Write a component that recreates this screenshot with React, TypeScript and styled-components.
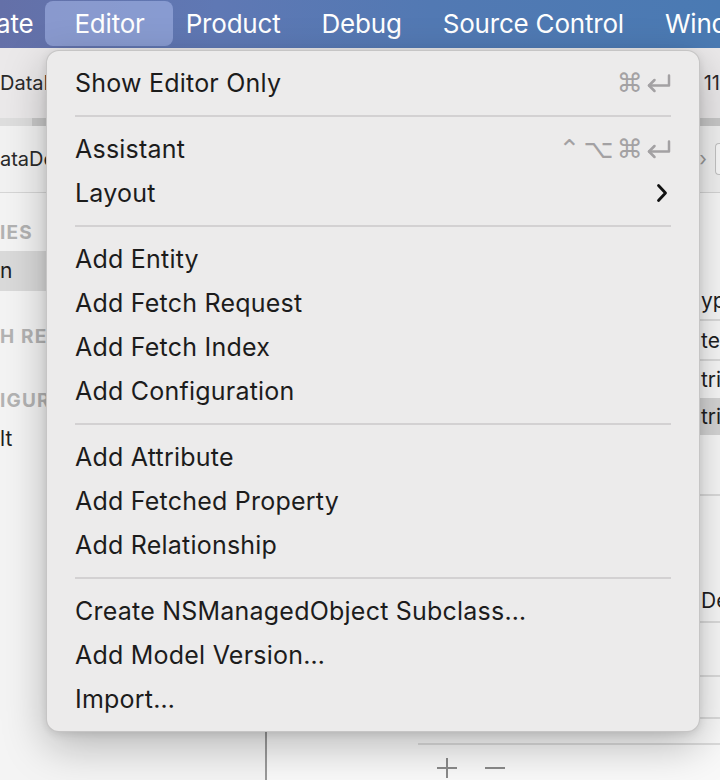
import React from "react";
import styled, { createGlobalStyle } from "styled-components";

const Global = createGlobalStyle`
  html, body { margin: 0; padding: 0; }
  body { font-family: Inter, "Noto Sans", "Liberation Sans", sans-serif; -webkit-font-smoothing: antialiased; }
`;

const Page = styled.div`
  position: relative;
  width: 720px;
  height: 780px;
  overflow: hidden;
  background: #f6f6f6;
  display: flex;
  flex-direction: column;
`;

const MenuBar = styled.div`
  height: 48px;
  flex: none;
  display: flex;
  align-items: center;
  background: linear-gradient(90deg, #6470a8 0%, #5f78b4 30%, #5279b3 60%, #4a7ab3 100%);
  white-space: nowrap;
`;

const BarItem = styled.div<{ $active?: boolean; $first?: boolean }>`
  position: relative;
  flex: none;
  margin: 0 20.5px;
  margin-left: ${(p) => (p.$first ? "-4px" : "20.5px")};
  font-size: 26px;
  color: #ffffff;
  line-height: 48px;
  letter-spacing: -0.2px;
  &::before {
    content: "";
    display: ${(p) => (p.$active ? "block" : "none")};
    position: absolute;
    left: -29px;
    right: -28px;
    top: 1px;
    bottom: 2px;
    border-radius: 8px;
    background: rgba(170, 185, 235, 0.55);
  }
  span { position: relative; }
`;

const Toolbar = styled.div`
  height: 70px;
  flex: none;
  display: flex;
  align-items: center;
  justify-content: space-between;
  background: #ebe9ea;
  font-size: 20px;
  color: #2a2a2a;
`;

const TabStrip = styled.div`
  height: 8px;
  flex: none;
  background: linear-gradient(90deg, #dedede 0 32px, #c9c9c9 32px);
`;

const JumpBar = styled.div`
  height: 66px;
  flex: none;
  display: flex;
  align-items: center;
  justify-content: space-between;
  background: #f2f2f2;
  border-bottom: 1px solid #d6d6d6;
  font-size: 20px;
  color: #2a2a2a;
`;

const JumpEnd = styled.div`
  display: flex;
  align-items: center;
  gap: 8px;
  color: #9a9a9a;
`;

const JumpBox = styled.div`
  width: 4px;
  height: 30px;
  border: 1px solid #c4c4c4;
  border-right: none;
  border-radius: 4px 0 0 4px;
  background: #fafafa;
`;

const Body = styled.div`
  flex: 1;
  display: flex;
`;

const Sidebar = styled.div`
  width: 265px;
  flex: none;
  background: #f4f4f4;
  border-right: 2px solid #9a9a9a;
  display: flex;
  flex-direction: column;
  padding-top: 28px;
`;

const SectionLabel = styled.div<{ $gap: number }>`
  margin-top: ${(p) => p.$gap}px;
  height: 24px;
  line-height: 24px;
  font-size: 19px;
  font-weight: 700;
  letter-spacing: 1.2px;
  color: #b3b3b3;
`;

const SideRow = styled.div<{ $selected?: boolean }>`
  margin-top: 6px;
  height: 40px;
  line-height: 40px;
  font-size: 21px;
  color: #1f1f1f;
  background: ${(p) => (p.$selected ? "#dadada" : "transparent")};
`;

const Detail = styled.div`
  flex: 1;
  display: flex;
  flex-direction: column;
  background: #f9f9f9;
  padding-left: 151px;
  padding-top: 88px;
`;

const TRow = styled.div<{ $h: number; $selected?: boolean; $line?: boolean; $align?: string }>`
  height: ${(p) => p.$h}px;
  flex: none;
  display: flex;
  align-items: ${(p) => p.$align || "center"};
  justify-content: flex-end;
  box-sizing: border-box;
  border-bottom: ${(p) => (p.$line ? "2px solid #dcdcdc" : "none")};
  background: ${(p) => (p.$selected ? "#d6d6d6" : "transparent")};
  font-size: 21px;
  color: #1f1f1f;
`;

const Cell = styled.span<{ $pad?: number }>`
  width: 19px;
  white-space: nowrap;
  padding-bottom: ${(p) => p.$pad || 0}px;
`;

const Footer = styled.div`
  display: flex;
  align-items: center;
  gap: 26px;
  padding-left: 18px;
  height: 46px;
  color: #8a8a8a;
`;

const Menu = styled.div`
  position: absolute;
  left: 46px;
  top: 50px;
  width: 654px;
  box-sizing: border-box;
  padding: 10px 0 10px;
  background: #ecebeb;
  border-radius: 13px;
  border: 1px solid rgba(0, 0, 0, 0.16);
  box-shadow: 0 14px 44px rgba(0, 0, 0, 0.26), 0 2px 8px rgba(0, 0, 0, 0.1);
  display: flex;
  flex-direction: column;
`;

const MenuRow = styled.div`
  height: 44px;
  display: flex;
  align-items: center;
  justify-content: space-between;
  padding: 0 28px 0 28px;
  font-size: 25px;
  color: #1c1c1c;
  letter-spacing: 0.22px;
`;

const Separator = styled.div`
  height: 22px;
  display: flex;
  align-items: center;
  padding: 0 28px 0 28px;
  &::after {
    content: "";
    flex: 1;
    height: 2px;
    background: #d3d1d2;
  }
`;

const Shortcut = styled.div`
  display: flex;
  align-items: center;
  gap: 3px;
  color: #a3a1a3;
  font-family: "DejaVu Sans", sans-serif;
  font-size: 26px;
`;

const Key = styled.span`
  display: inline-block;
  line-height: 1;
`;

const SubmenuMark = styled.span`
  display: flex;
  margin-right: 3px;
`;

const ReturnIcon = () => (
  <svg width="25" height="19" viewBox="0 0 25 19" fill="none" stroke="#a3a1a3" strokeWidth="2.5" strokeLinecap="round" strokeLinejoin="round">
    <path d="M23 1.5 V11.5 H3" />
    <path d="M8.5 6 L3 11.5 L8.5 17" />
  </svg>
);

const Chevron = () => (
  <svg width="12" height="20" viewBox="0 0 12 20" fill="none" stroke="#111" strokeWidth="2.8" strokeLinecap="round" strokeLinejoin="round">
    <path d="M2.5 2.5 L9.5 10 L2.5 17.5" />
  </svg>
);

const PlusIcon = () => (
  <svg width="22" height="22" viewBox="0 0 22 22" stroke="#8a8a8a" strokeWidth="2">
    <path d="M11 1 V21 M1 11 H21" />
  </svg>
);

const MinusIcon = () => (
  <svg width="22" height="22" viewBox="0 0 22 22" stroke="#8a8a8a" strokeWidth="2">
    <path d="M1 11 H21" />
  </svg>
);

type Item =
  | { kind: "sep" }
  | { kind: "item"; label: string; keys?: string[]; ret?: boolean; submenu?: boolean };

const items: Item[] = [
  { kind: "item", label: "Show Editor Only", keys: ["⌘"], ret: true },
  { kind: "sep" },
  { kind: "item", label: "Assistant", keys: ["⌃", "⌥", "⌘"], ret: true },
  { kind: "item", label: "Layout", submenu: true },
  { kind: "sep" },
  { kind: "item", label: "Add Entity" },
  { kind: "item", label: "Add Fetch Request" },
  { kind: "item", label: "Add Fetch Index" },
  { kind: "item", label: "Add Configuration" },
  { kind: "sep" },
  { kind: "item", label: "Add Attribute" },
  { kind: "item", label: "Add Fetched Property" },
  { kind: "item", label: "Add Relationship" },
  { kind: "sep" },
  { kind: "item", label: "Create NSManagedObject Subclass…" },
  { kind: "item", label: "Add Model Version…" },
  { kind: "item", label: "Import…" },
];

export default function App() {
  return (
    <>
      <Global />
      <Page>
        <MenuBar>
          <BarItem $first><span>ate</span></BarItem>
          <BarItem $active><span>Editor</span></BarItem>
          <BarItem><span>Product</span></BarItem>
          <BarItem><span>Debug</span></BarItem>
          <BarItem><span>Source Control</span></BarItem>
          <BarItem><span>Wind</span></BarItem>
        </MenuBar>
        <Toolbar>
          <span>DataD</span>
          <span>11</span>
        </Toolbar>
        <TabStrip />
        <JumpBar>
          <span>ataDe</span>
          <JumpEnd>
            <span>›</span>
            <JumpBox />
          </JumpEnd>
        </JumpBar>
        <Body>
          <Sidebar>
            <SectionLabel $gap={0}>IES</SectionLabel>
            <SideRow $selected>n</SideRow>
            <SectionLabel $gap={34}>H REQ</SectionLabel>
            <SectionLabel $gap={40}>IGUR</SectionLabel>
            <SideRow>lt</SideRow>
          </Sidebar>
          <Detail>
            <TRow $h={40} $line><Cell>yp</Cell></TRow>
            <TRow $h={40} $line><Cell>te</Cell></TRow>
            <TRow $h={37}><Cell>tri</Cell></TRow>
            <TRow $h={37} $selected><Cell>tri</Cell></TRow>
            <TRow $h={61} $line />
            <TRow $h={127} $line $align="flex-end"><Cell $pad={8}>De</Cell></TRow>
            <TRow $h={54} $line />
            <TRow $h={42} $line />
            <TRow $h={26} $line />
            <Footer>
              <PlusIcon />
              <MinusIcon />
            </Footer>
          </Detail>
        </Body>
        <Menu>
          {items.map((it, i) =>
            it.kind === "sep" ? (
              <Separator key={i} />
            ) : (
              <MenuRow key={i}>
                <span>{it.label}</span>
                {it.submenu ? (
                  <SubmenuMark><Chevron /></SubmenuMark>
                ) : it.keys ? (
                  <Shortcut>
                    {it.keys.map((k) => (
                      <Key key={k}>{k}</Key>
                    ))}
                    {it.ret && <ReturnIcon />}
                  </Shortcut>
                ) : null}
              </MenuRow>
            )
          )}
        </Menu>
      </Page>
    </>
  );
}
